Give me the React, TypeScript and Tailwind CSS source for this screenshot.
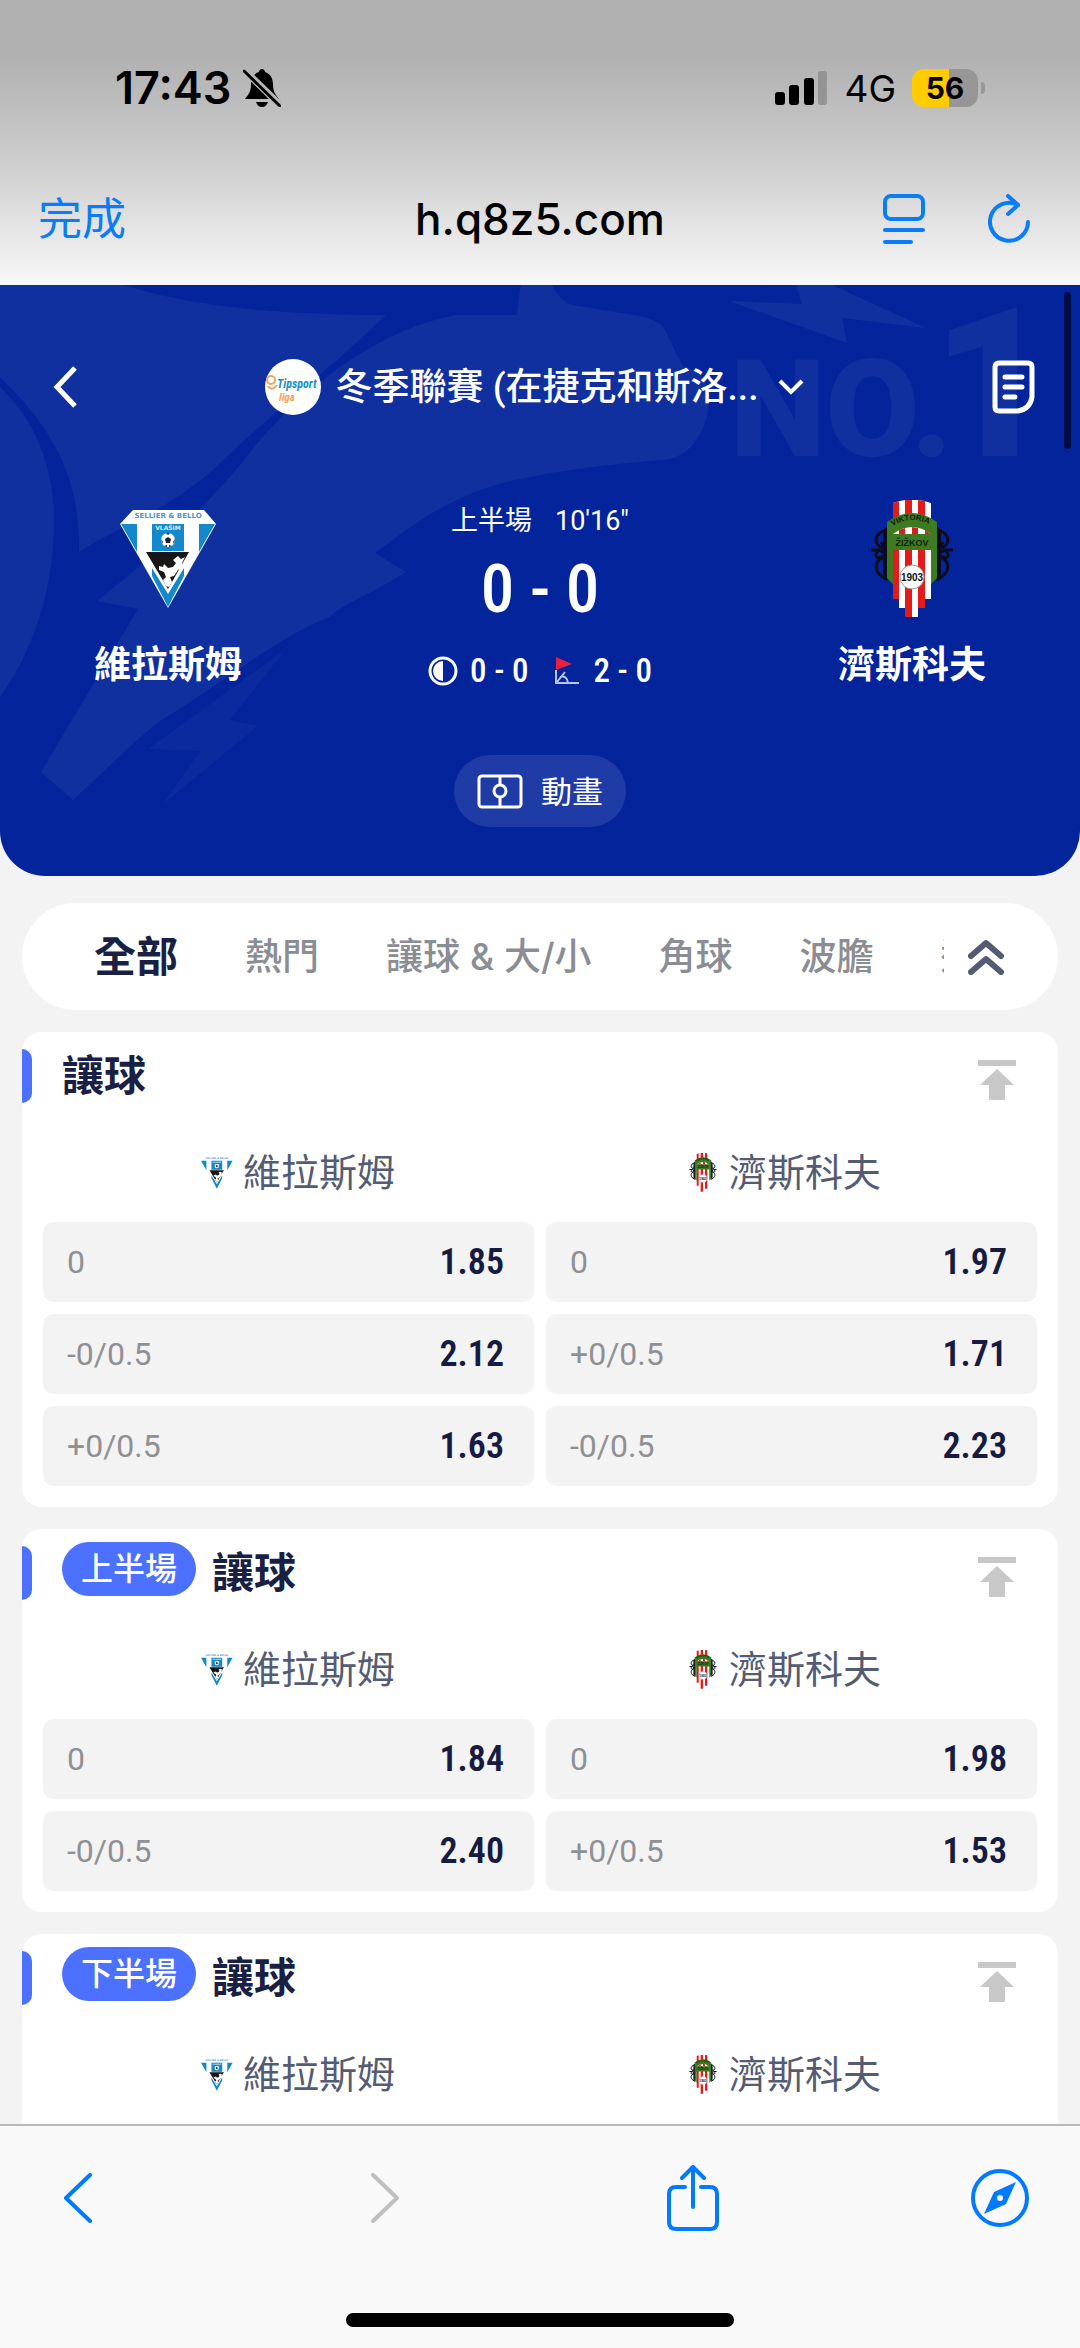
import { useState } from 'react';

type Odd = { line: string; price: string };
type Market = { id: string; period?: string; title: string; rows: Array<[Odd, Odd]> };

const HOME = '維拉斯姆';
const AWAY = '濟斯科夫';

const TABS = ['全部', '熱門', '讓球 & 大/小', '角球', '波膽', '進球'];

const MARKETS: Market[] = [
  {
    id: 'full',
    title: '讓球',
    rows: [
      [{ line: '0', price: '1.85' }, { line: '0', price: '1.97' }],
      [{ line: '-0/0.5', price: '2.12' }, { line: '+0/0.5', price: '1.71' }],
      [{ line: '+0/0.5', price: '1.63' }, { line: '-0/0.5', price: '2.23' }],
    ],
  },
  {
    id: 'first-half',
    period: '上半場',
    title: '讓球',
    rows: [
      [{ line: '0', price: '1.84' }, { line: '0', price: '1.98' }],
      [{ line: '-0/0.5', price: '2.40' }, { line: '+0/0.5', price: '1.53' }],
    ],
  },
  {
    id: 'second-half',
    period: '下半場',
    title: '讓球',
    rows: [],
  },
];

const HomeCrest = ({ className }: { className: string }) => (
  <svg viewBox="0 0 97 98" className={className} aria-hidden="true">
    <path d="M13 0H84L96 14L48 98L0 14Z" fill="#fff" />
    <path d="M1 14H17V42ZM79 14H95L79 42Z" fill="#1488cc" />
    <path d="M32 14H64V41H32Z" fill="#1488cc" />
    <path d="M32 58L48 84L64 58V66L48 97L32 66Z" fill="#1488cc" />
    <path d="M26 42H69L48 79Z" fill="#191716" />
    <path d="M58 46l3 3 4-2-3 6 1 4-5 3-4 6-4 1 2 5-3 5-3-1-3-6 3-3-2-5-5-2 0-4 4 1 1-3 4 4 5-1 3-4-3-3z" fill="#fff" />
    <circle cx="48" cy="30" r="7" fill="#fff" />
    <path d="M48 27l3 2-1 4h-4l-1-4zM46 23h4l-2 2zM41 29l2 3-1 2zM55 29l-2 3 1 2zM44 36l3-1 0 2zM52 36l-3-1 0 2z" fill="#222" />
    <text x="48" y="8" fontSize="7" fontWeight="700" textAnchor="middle" fill="#4b9ac9" fontFamily="DejaVu Sans">
      SELLIER &amp; BELLO
    </text>
    <text x="48" y="20" fontSize="6" fontWeight="700" textAnchor="middle" fill="#d7edf8" fontFamily="DejaVu Sans">
      VLAŠIM
    </text>
  </svg>
);

const AwayCrest = ({ className }: { className: string }) => (
  <svg viewBox="0 0 82 118" className={className} aria-hidden="true">
    <path d="M16 30C6 32 2 40 8 46C14 50 12 44 10 42M0 50H8L16 54M16 56C6 58 2 66 8 74L16 80M8 50C2 56 6 60 12 56" fill="none" stroke="#0b0b1c" strokeWidth="3" />
    <path d="M66 30C76 32 80 40 74 46C68 50 70 44 72 42M82 50H74L66 54M66 56C76 58 80 66 74 74L66 80M74 50C80 56 76 60 70 56" fill="none" stroke="#0b0b1c" strokeWidth="3" />
    <path d="M12 30L17 26V80L12 74ZM70 30L65 26V80L70 74Z" fill="#0b0b1c" />
    <path d="M22 3Q41-4 60 3V99H54V108H47V117H34V108H28V99H22Z" fill="#fff" />
    <path d="M22 3L28 1V99H22ZM34 0H41V117H34ZM47 0L54 1V108H47Z" fill="#e31b1b" />
    <path d="M16 22Q41 4 66 22V78L60 84V50H22V84L16 78Z" fill="#3d7a22" />
    <path d="M22 34Q41 20 60 34H22Z" fill="#fff" />
    <path d="M28 30L34 28V34H28ZM41 27L47 28V34H41ZM54 30L60 34H54Z" fill="#e31b1b" />
    <path id="crestArc" d="M19 28Q41 12 65 28" fill="none" />
    <text fontSize="8" fontWeight="700" fill="#10240a" fontFamily="Liberation Sans">
      <textPath href="#crestArc" startOffset="3">VIKTORIA</textPath>
    </text>
    <text x="41" y="46" fontSize="9" fontWeight="700" textAnchor="middle" fill="#10240a" fontFamily="Liberation Sans">
      ŽIŽKOV
    </text>
    <circle cx="41" cy="77" r="12" fill="#fff" stroke="#9a9a9a" />
    <text x="41" y="81" fontSize="10" fontWeight="700" textAnchor="middle" fill="#111" fontFamily="Liberation Sans">
      1903
    </text>
  </svg>
);

const HeroArt = () => (
  <svg
    viewBox="0 0 1080 591"
    preserveAspectRatio="xMidYMin slice"
    className="absolute inset-0 w-full h-full"
    aria-hidden="true"
  >
    <g fill="#1130a0">
      <path d="M0 0H124C180 18 260 30 386 30C330 84 270 130 220 178C170 226 120 240 79 267C80 200 60 150 0 92Z" />
      <path d="M0 102C40 140 54 190 54 235C54 310 30 370 0 412Z" />
      <path d="M455 30H517L520 3L522 0H552Q560 16 572 20L640 31Q660 36 665 45L682 80Q710 90 709 115C708 145 690 175 661 175C600 180 520 190 480 205C430 224 400 250 375 268L406 287C370 310 340 320 330 332C280 350 220 400 160 436C130 460 100 490 73 515L41 487L138 324L97 316C130 290 190 240 240 180C300 100 380 45 455 30Z" />
      <path d="M729 16L802 19L796 0H832L926 43L842 33L847 58Z" />
      <path d="M286 364L230 435L258 441L162 520L200 466L148 464Z" opacity="0.5" />
    </g>
    <g fill="#1130a0" fontFamily="Roboto" fontWeight="900">
      <text x="730" y="171" fontSize="136">
        NO.
      </text>
      <text x="932" y="171" fontSize="208">
        1
      </text>
    </g>
  </svg>
);

const StatusBar = () => (
  <div className="flex items-center justify-between h-[176px] pl-[115px] pr-[95px]">
    <div className="flex items-center gap-3 text-black">
      <span className="text-[45px] font-semibold">17:43</span>
      <svg viewBox="0 0 38 38" className="w-[38px] h-[38px]" aria-hidden="true">
        <path d="M19 0C21 0 22 2 22 3C28 5 30 10 30 16C30 23 33 26 36 30H2C5 26 8 23 8 16C8 10 10 5 16 3C16 2 17 0 19 0Z" />
        <path d="M13 33H25C24 36 22 38 19 38S14 36 13 33Z" />
        <path d="M2 2L37 36" stroke="#b6b6b6" strokeWidth="7" />
        <path d="M1 2L37 37" stroke="#000" strokeWidth="3" strokeLinecap="round" />
      </svg>
    </div>
    <div className="flex items-center gap-4">
      <svg viewBox="0 0 53 34" className="w-[53px] h-[34px]" aria-hidden="true">
        <rect x="0" y="21" width="10" height="13" rx="3" />
        <rect x="14" y="14" width="10" height="20" rx="3" />
        <rect x="29" y="7" width="10" height="27" rx="3" />
        <rect x="43" y="0" width="9" height="34" rx="3" fill="#949494" />
      </svg>
      <span className="text-[37px] leading-none">4G</span>
      <div className="flex items-center gap-[3px]">
        <div className="flex items-center justify-center w-[66px] h-[38px] rounded-xl bg-linear-to-r from-[#ffcc00] from-56% to-[#969696] to-56% text-[30px] font-bold leading-none">
          56
        </div>
        <div className="w-1 h-3 rounded-r-full bg-[#999]" />
      </div>
    </div>
  </div>
);

const BrowserBar = () => (
  <div className="grid grid-cols-[1fr_auto_1fr] items-center h-[109px] pl-[38px] pr-[50px] pb-[24px]">
    <button className="justify-self-start text-[44px] leading-none text-[#0a7cf5]">完成</button>
    <span className="text-[44px] font-medium leading-none text-black pl-3">h.q8z5.com</span>
    <div className="flex items-center gap-[63px] justify-self-end">
      <button aria-label="Reader">
        <svg viewBox="0 0 42 50" className="w-[42px] h-[50px]" fill="none" stroke="#0a7cf5" strokeWidth="4" strokeLinecap="round">
          <rect x="2" y="2" width="38" height="23" rx="6" />
          <path d="M2 36H40M2 48H28" />
        </svg>
      </button>
      <button aria-label="Reload">
        <svg viewBox="0 0 42 50" className="w-[42px] h-[50px]" fill="none" stroke="#0a7cf5" strokeWidth="4" strokeLinecap="round" strokeLinejoin="round">
          <path d="M40 28A19 19 0 1 1 30 11" />
          <path d="M20 2L30 11L20 20" />
        </svg>
      </button>
    </div>
  </div>
);

const Hero = () => (
  <section className="relative overflow-hidden shrink-0 pb-[49px] rounded-b-[45px] bg-[#03249b] text-white">
    <HeroArt />
    <div className="relative">
      <div className="flex items-center justify-between h-[72px] mt-[66px] pl-[53px] pr-[45px]">
        <button aria-label="Back">
          <svg viewBox="0 0 24 42" className="w-6 h-[42px]" fill="none" stroke="#fff" strokeWidth="5">
            <path d="M22 2L4 21L22 40" />
          </svg>
        </button>
        <button className="flex items-center">
          <svg viewBox="0 0 57 57" className="w-[57px] h-[57px] mr-[14px]" aria-hidden="true">
            <circle cx="28" cy="28" r="28" fill="#fff" />
            <circle cx="6" cy="21" r="4" fill="none" stroke="#f0a35e" strokeWidth="2" />
            <path d="M3 27Q7 33 12 26" fill="none" stroke="#f0a35e" strokeWidth="2" />
            <text x="12" y="29" fontSize="12" fontWeight="700" fontStyle="italic" fill="#1b8fc6" fontFamily="Roboto Condensed, Liberation Sans">
              Tipsport
            </text>
            <text x="14" y="42" fontSize="11" fontStyle="italic" fontWeight="700" fill="#f0a35e" fontFamily="Roboto Condensed, Liberation Sans">
              liga
            </text>
          </svg>
          <span className="text-[37px] font-medium leading-none font-['Roboto','Noto_Sans_CJK_TC',sans-serif]">
            冬季聯賽 (在捷克和斯洛...
          </span>
          <svg viewBox="0 0 26 16" className="w-[26px] h-4 ml-5" fill="none" stroke="#fff" strokeWidth="4">
            <path d="M2 2L13 13L24 2" />
          </svg>
        </button>
        <button aria-label="Bet slip">
          <svg viewBox="0 0 43 54" className="w-[43px] h-[54px]" fill="none" stroke="#fff" strokeWidth="5">
            <path d="M7 3H36Q40 3 40 7V37Q38 49 26 51H7Q3 51 3 47V7Q3 3 7 3Z" />
            <path d="M13 17H30M13 27H30M13 37H23" strokeLinecap="round" />
          </svg>
        </button>
      </div>

      <div className="flex justify-between px-[62px] pt-[74px]">
        <div className="flex flex-col items-center w-[212px]">
          <div className="flex items-center h-[124px]">
            <HomeCrest className="w-[97px] h-[98px]" />
          </div>
          <span className="mt-5 text-[37px] font-bold leading-[48px]">{HOME}</span>
        </div>
        <div className="flex flex-col items-center">
          <div className="flex items-center gap-[23px] h-10 mt-1 text-[27px]">
            <span>上半場</span>
            <span className="font-['Roboto']">10'16"</span>
          </div>
          <div className="mt-5 text-[67px] leading-[56px] font-medium font-['Roboto_Condensed','Roboto',sans-serif]">
            0 - 0
          </div>
          <div className="flex items-center h-10 mt-[34px] text-[33px] font-medium font-['Roboto_Condensed','Roboto',sans-serif]">
            <svg viewBox="0 0 30 30" className="w-[30px] h-[30px] mr-3" aria-hidden="true">
              <circle cx="15" cy="15" r="13" fill="none" stroke="#fff" strokeWidth="3" />
              <path d="M15 5V25A10 10 0 0 1 15 5Z" fill="#fff" />
            </svg>
            <span>0 - 0</span>
            <svg viewBox="0 0 24 28" className="w-6 h-7 ml-[26px] mr-[15px]" fill="none" aria-hidden="true">
              <path d="M1 0L17 7L1 13Z" fill="#e8203f" />
              <path d="M1 13V26H24" stroke="#b9c4ea" strokeWidth="2" />
              <path d="M2 25L10 15M5 20Q12 18 13 26" stroke="#b9c4ea" strokeWidth="2" />
            </svg>
            <span>2 - 0</span>
          </div>
        </div>
        <div className="flex flex-col items-center w-[212px]">
          <div className="flex items-center h-[124px]">
            <AwayCrest className="w-[82px] h-[118px]" />
          </div>
          <span className="mt-5 text-[37px] font-bold leading-[48px]">{AWAY}</span>
        </div>
      </div>

      <div className="flex justify-center mt-16">
        <button className="flex items-center gap-[18px] h-[72px] px-[23px] rounded-full bg-[#1f3ba5] text-[31px] leading-none">
          <svg viewBox="0 0 46 35" className="w-[46px] h-[35px]" fill="none" stroke="#fff" strokeWidth="3" aria-hidden="true">
            <rect x="2" y="2" width="42" height="31" rx="3" />
            <path d="M23 2V11M23 24V33" />
            <circle cx="23" cy="17" r="6" />
          </svg>
          動畫
        </button>
      </div>
    </div>
    <div className="absolute top-[7px] right-[9px] w-[7px] h-[157px] rounded-full bg-[#020c44]" />
  </section>
);

const MarketCard = ({ market }: { market: Market }) => (
  <section className="shrink-0 rounded-[20px] bg-white pb-[21px]">
    <header className="flex items-center justify-between h-[88px] pr-[42px]">
      <div className="flex items-center">
        <span className="w-[10px] h-[54px] mr-[30px] rounded-r-[10px] bg-[#4c70ff]" />
        {market.period && (
          <span className="mr-4 mb-2 px-[19px] rounded-full bg-[#4c70ff] text-[32px] leading-[54px] font-medium text-white">
            {market.period}
          </span>
        )}
        <h2 className="text-[42px] leading-none font-bold text-[#1a1f44]">{market.title}</h2>
      </div>
      <button aria-label="Pin to top">
        <svg viewBox="0 0 38 40" className="w-[38px] h-10 mt-2" fill="#c8c8c8">
          <path d="M0 0H38V6H0ZM19 9L36 25H27V40H11V25H2Z" />
        </svg>
      </button>
    </header>
    <div className="flex h-[102px] px-8 text-[38px] text-[#545c74]">
      <div className="flex flex-1 items-center justify-center gap-2 pt-[2px]">
        <HomeCrest className="w-9 h-[33px]" />
        {HOME}
      </div>
      <div className="flex flex-1 items-center justify-center gap-2 pt-[2px]">
        <AwayCrest className="w-9 h-[39px]" />
        {AWAY}
      </div>
    </div>
    <div className="flex flex-col gap-3 px-[21px]">
      {market.rows.map((row, index) => (
        <div key={index} className="grid grid-cols-2 gap-3">
          {row.map((odd, side) => (
            <button key={side} className="flex items-center justify-between h-20 pl-6 pr-[30px] rounded-[10px] bg-[#f3f3f3]">
              <span className="font-['Roboto',sans-serif] text-[32px] text-[#8f9094]">{odd.line}</span>
              <span className="font-['Roboto_Condensed','Roboto',sans-serif] text-[36px] font-semibold text-[#171b42]">
                {odd.price}
              </span>
            </button>
          ))}
        </div>
      ))}
    </div>
  </section>
);

const App: React.FC = () => {
  const [ activeTab, setActiveTab ] = useState<string>('全部');

  return (
    <div className="flex flex-col h-screen overflow-hidden bg-[#f3f3f3] font-['Inter','Noto_Sans_CJK_TC',sans-serif]">
      <header className="shrink-0 bg-linear-to-b from-[#b1b1b1] from-20% via-[#c9c9c9] via-52% to-[#f8f8f8]">
        <StatusBar />
        <BrowserBar />
      </header>

      <main className="flex flex-col flex-1 min-h-0 overflow-hidden">
        <Hero />
        <div className="flex flex-col gap-[22px] px-[22px] pt-[27px]">
          <nav className="flex items-center shrink-0 h-[107px] pl-[72px] pr-[54px] rounded-full bg-white">
            <div className="flex flex-1 items-center gap-[67px] min-w-0 overflow-hidden whitespace-nowrap">
              {TABS.map((tab) => (
                <button
                  key={tab}
                  onClick={() => setActiveTab(tab)}
                  className={
                    tab === activeTab
                      ? 'shrink-0 text-[42px] font-bold text-[#1a1f44]'
                      : 'shrink-0 text-[37px] font-medium text-[#8a8d94]'
                  }
                >
                  {tab}
                </button>
              ))}
            </div>
            <button aria-label="Collapse all" className="ml-6">
              <svg viewBox="0 0 36 36" className="w-9 h-9" fill="none" stroke="#545c74" strokeWidth="6" strokeLinecap="round" strokeLinejoin="round">
                <path d="M3 17L18 4L33 17M3 33L18 20L33 33" />
              </svg>
            </button>
          </nav>
          {MARKETS.map((market) => (
            <MarketCard key={market.id} market={market} />
          ))}
        </div>
      </main>

      <footer className="shrink-0 border-t-2 border-[#b8b8b8] bg-[#f9f9fa]">
        <div className="flex items-center justify-between h-[144px] pl-12 pr-[50px]">
          <button aria-label="Previous page" className="flex justify-center w-[60px]">
            <svg viewBox="0 0 30 50" className="w-[30px] h-[50px]" fill="none" stroke="#007aff" strokeWidth="4" strokeLinecap="round" strokeLinejoin="round">
              <path d="M27 2L3 25L27 48" />
            </svg>
          </button>
          <button aria-label="Next page" className="flex justify-center w-[60px]">
            <svg viewBox="0 0 30 50" className="w-[30px] h-[50px]" fill="none" stroke="#bfbfbf" strokeWidth="4" strokeLinecap="round" strokeLinejoin="round">
              <path d="M3 2L27 25L3 48" />
            </svg>
          </button>
          <button aria-label="Share" className="flex justify-center w-[60px]">
            <svg viewBox="0 0 52 66" className="w-[52px] h-[66px]" fill="none" stroke="#007aff" strokeWidth="4" strokeLinecap="round" strokeLinejoin="round">
              <path d="M18 22H9Q2 22 2 29V57Q2 64 9 64H43Q50 64 50 57V29Q50 22 43 22H34" />
              <path d="M26 42V3M15 13L26 2L37 13" />
            </svg>
          </button>
          <button aria-label="Open in browser" className="flex justify-center w-[60px]">
            <svg viewBox="0 0 58 58" className="w-[58px] h-[58px]" fill="none">
              <circle cx="29" cy="29" r="27" stroke="#007aff" strokeWidth="4" />
              <path d="M45 13L35 35L13 45L23 23Z" fill="#007aff" />
              <circle cx="29" cy="29" r="3" fill="#f9f9fa" />
            </svg>
          </button>
        </div>
        <div className="flex justify-center pt-[43px] pb-[21px]">
          <div className="w-[388px] h-[14px] rounded-full bg-black" />
        </div>
      </footer>
    </div>
  );
};

export default App;
